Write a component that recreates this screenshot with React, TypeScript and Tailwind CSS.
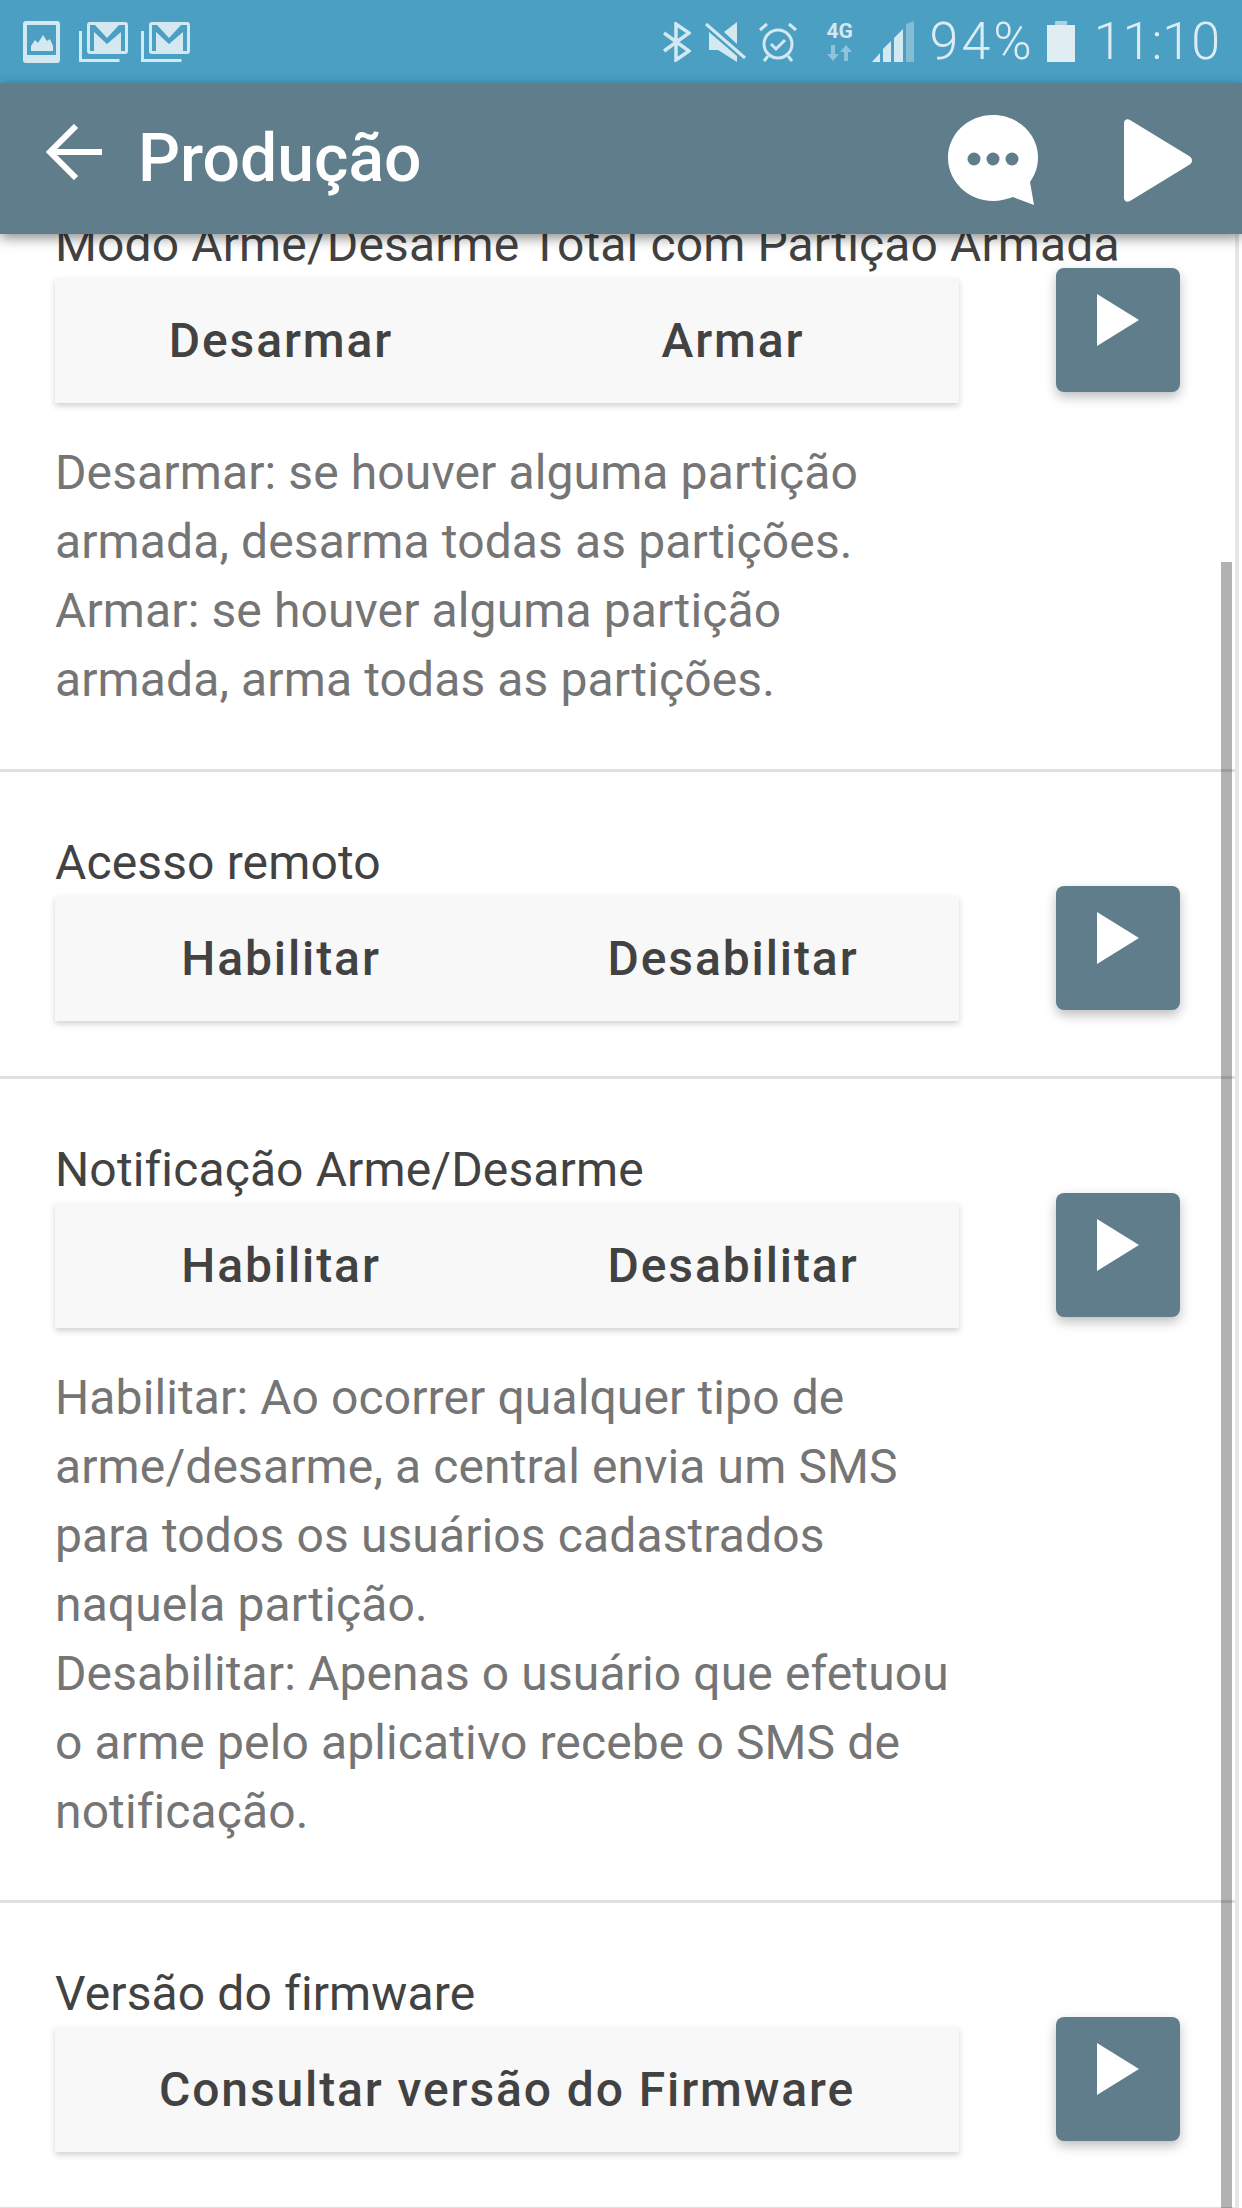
const rowTitle = "text-[48px] leading-[52px] tracking-[0.13px] text-[#424242]";

function Mail({ className }: { className: string }) {
  return (
    <svg className={className} viewBox="0 0 49 40" fill="none">
      <path d="M1.5 9v29.5h39" stroke="#d3e8f0" strokeWidth="3" />
      <rect x="8" y="0" width="41" height="32" rx="3" fill="#d3e8f0" />
      <path d="M11 3h5l12 13 12-13h6v26h-4V10L28 22 15 10v19h-4z" fill="#4a9fc2" />
    </svg>
  );
}

function Play({ className }: { className: string }) {
  return (
    <svg className={className} viewBox="0 0 42 52" fill="#fff">
      <path d="M0 0 42 26 0 52z" />
    </svg>
  );
}

function StatusBar() {
  return (
    <div className="h-[83px] bg-[#4a9fc2] flex items-center pl-[23px] text-[#dcecf3] font-light text-[52px] leading-none">
      <svg className="w-[37px] h-[42px] mr-[19px]" viewBox="0 0 37 42">
        <rect width="37" height="42" rx="3" fill="#d3e8f0" />
        <rect x="4" y="4" width="29" height="30" fill="#4a9fc2" />
        <path d="M8 30v-5l4-6 3 3 5-8 4 6 3-2 3 7v5z" fill="#d3e8f0" />
      </svg>
      <Mail className="w-[49px] h-[40px] mr-[13px]" />
      <Mail className="w-[49px] h-[40px]" />
      <div className="ml-auto flex items-center pr-[22px]">
        <svg className="w-[28px] h-[40px] mr-[13px]" viewBox="0 0 28 40" fill="none" stroke="#d3e8f0" strokeWidth="3.5">
          <path d="M1 11 26 29 13 38V2l13 9L1 29" />
        </svg>
        <svg className="w-[42px] h-[40px] mr-[13px]" viewBox="0 0 42 40">
          <path d="M33 0v22L20 10zM5 10l28 24v6L14 28H5z" fill="#d3e8f0" />
          <path d="M2 2l39 34" stroke="#d3e8f0" strokeWidth="3" />
        </svg>
        <svg className="w-[38px] h-[40px] mr-[27px]" viewBox="0 0 38 40" fill="none" stroke="#d3e8f0" strokeWidth="3">
          <circle cx="19" cy="22" r="14" />
          <path d="M12 22l5 5 9-9M1 8l7-6M37 8l-7-6M9 34l-4 5M29 34l4 5" />
        </svg>
        <div className="w-[32px] h-[41px] mr-[16px] flex flex-col items-center">
          <span className="text-[21px] leading-[20px] font-bold text-[#d3e8f0]">4G</span>
          <svg className="w-[25px] h-[16px] mt-[4px]" viewBox="0 0 25 16" fill="#8fc3d9">
            <path d="M4 0h4v9h4l-6 7-6-7h4zM17 16h4V7h4l-6-7-6 7h4z" />
          </svg>
        </div>
        <svg className="w-[42px] h-[41px] mr-[16px]" viewBox="0 0 42 41">
          <path d="M34 41V3l8-3v41z" fill="#84bcd3" />
          <path d="M0 41 8 32v9zM11 41V28l8-8v21zM22 41V17l9-9v33z" fill="#d3e8f0" />
        </svg>
        <span className="tracking-[3px]">94%</span>
        <svg className="w-[28px] h-[41px] ml-[12px] mr-[19px]" viewBox="0 0 28 41">
          <rect x="8" width="12" height="5" fill="#a9d1e1" />
          <rect y="4" width="28" height="37" fill="#e0eef4" />
        </svg>
        <span>11:10</span>
      </div>
    </div>
  );
}

function Toolbar() {
  return (
    <div className="h-[151px] bg-[#607d8b] flex items-center shadow-[0_4px_12px_rgba(0,0,0,0.45)]">
      <svg className="w-[56px] h-[56px] ml-[46px] mb-[14px]" viewBox="0 0 56 56" fill="none" stroke="#fff" strokeWidth="6">
        <path d="M56 28H5M30 2 4 28l26 26" />
      </svg>
      <h1 className="ml-[36px] text-[66px] font-medium text-white leading-none mt-[1px]">Produção</h1>
      <svg className="w-[90px] h-[90px] ml-auto mt-[3px]" viewBox="0 0 90 90">
        <path d="M45 0c25 0 45 19 45 42 0 10-3 18-8 25l4 23-21-8c-6 2-13 4-20 4C20 86 0 66 0 43 0 19 20 0 45 0z" fill="#fff" />
        <circle cx="26" cy="44" r="6.5" fill="#607d8b" />
        <circle cx="45" cy="44" r="6.5" fill="#607d8b" />
        <circle cx="64" cy="44" r="6.5" fill="#607d8b" />
      </svg>
      <svg className="w-[68px] h-[83px] ml-[86px] mr-[50px] mt-[3px]" viewBox="0 0 68 83" fill="#fff">
        <path d="M0 4c0-3 3-5 6-3l59 36c4 2 4 7 0 9L6 82c-3 2-6 0-6-3z" />
      </svg>
    </div>
  );
}

function Row({ title, actions, desc, className }: { title: string; actions: string[]; desc?: string[]; className?: string }) {
  return (
    <div className={"flex pl-[55px] border-b-[3px] border-[#e0e0e0] " + (className ?? "")}>
      <div className="w-[904px]">
        <div className={rowTitle + " whitespace-nowrap"}>{title}</div>
        <div className="h-[125px] mt-[7px] bg-[#f8f8f8] shadow-[0_3px_6px_rgba(0,0,0,0.18)] flex items-center">
          {actions.map((a) => (
            <span key={a} className="flex-1 text-center text-[48px] font-medium tracking-[1.9px] text-[#424242]">
              {a}
            </span>
          ))}
        </div>
        {desc && (
          <div className="mt-[35px] text-[48px] leading-[69px] tracking-[0.12px] text-[#757575] whitespace-nowrap">
            {desc.map((l) => (
              <div key={l}>{l}</div>
            ))}
          </div>
        )}
      </div>
      <button className="w-[124px] h-[124px] ml-[97px] mt-[49px] bg-[#607d8b] rounded-[8px] shadow-[0_5px_12px_rgba(0,0,0,0.26)] flex justify-center pt-[26px] shrink-0">
        <Play className="w-[42px] h-[52px]" />
      </button>
    </div>
  );
}

export default function App() {
  return (
    <div className="relative w-[1242px] h-[2208px] overflow-hidden bg-white font-[Roboto]">
      <div className="relative z-10">
        <StatusBar />
        <Toolbar />
      </div>
      <div className="-mt-[15px] w-[1236px]">
        <Row
          className="pb-[55px]"
          title="Modo Arme/Desarme Total com Partição Armada"
          actions={["Desarmar", "Armar"]}
          desc={[
            "Desarmar: se houver alguma partição",
            "armada, desarma todas as partições.",
            "Armar: se houver alguma partição",
            "armada, arma todas as partições.",
          ]}
        />
        <Row className="pt-[65px] pb-[55px]" title="Acesso remoto" actions={["Habilitar", "Desabilitar"]} />
        <Row
          className="pt-[65px] pb-[54px]"
          title="Notificação Arme/Desarme"
          actions={["Habilitar", "Desabilitar"]}
          desc={[
            "Habilitar: Ao ocorrer qualquer tipo de",
            "arme/desarme, a central envia um SMS",
            "para todos os usuários cadastrados",
            "naquela partição.",
            "Desabilitar: Apenas o usuário que efetuou",
            "o arme pelo aplicativo recebe o SMS de",
            "notificação.",
          ]}
        />
        <Row className="pt-[65px] pb-[55px]" title="Versão do firmware" actions={["Consultar versão do Firmware"]} />
      </div>
      <div className="absolute left-[1221px] top-[562px] bottom-0 w-[11px] bg-black/30" />
      <div className="absolute left-[1235px] top-[234px] bottom-0 w-[4px] bg-[#e6e6e6]" />
    </div>
  );
}
